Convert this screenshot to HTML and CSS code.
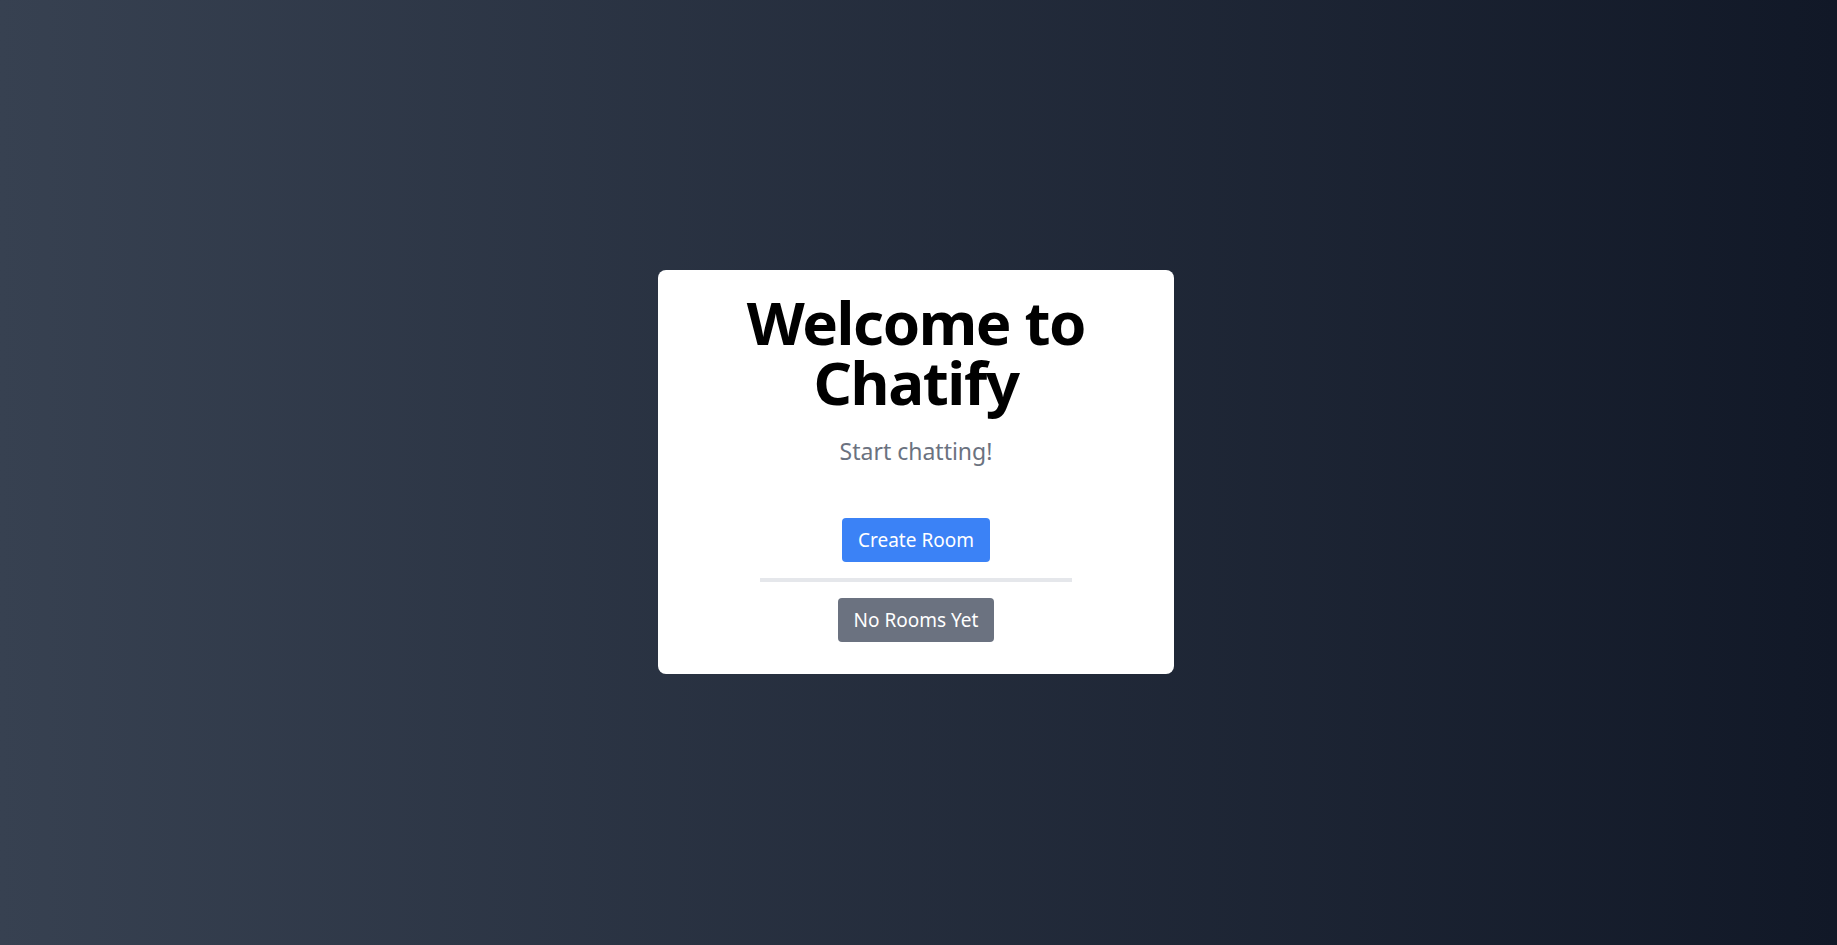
FILE: index.html
```html
<!DOCTYPE html>
<html lang="en">
<head>
<meta charset="utf-8">
<title>Chatify</title>
<link rel="stylesheet" href="styles.css">
</head>
<body>
<main class="page">
  <section class="card">
    <h1 class="title">Welcome to Chatify</h1>
    <p class="subtitle">Start chatting!</p>
    <div class="actions">
      <button class="btn btn-primary">Create Room</button>
      <div class="divider"></div>
      <button class="btn btn-muted">No Rooms Yet</button>
    </div>
  </section>
</main>
</body>
</html>
```
FILE: styles.css
```css
* { box-sizing: border-box; }
html, body { margin: 0; padding: 0; height: 100%; }
body {
  font-family: "Noto Sans", "Open Sans", sans-serif;
  background: linear-gradient(to right, #374151, #111827);
}
.page {
  height: 100%;
  display: flex;
  align-items: center;
  justify-content: center;
  padding: 0 5px 2px 0;
}
.card {
  width: 516px;
  background: #ffffff;
  border-radius: 8px;
  padding: 22px 24px 32px;
  display: flex;
  flex-direction: column;
  align-items: center;
  text-align: center;
}
.title {
  margin: 0 0 23px;
  width: 360px;
  font-size: 60px;
  line-height: 60px;
  font-weight: 700;
  color: #000;
  letter-spacing: -1.4px;
}
.subtitle {
  margin: 0 0 51px;
  font-size: 23px;
  line-height: 32px;
  color: #6b7280;
}
.actions {
  display: flex;
  flex-direction: column;
  align-items: center;
}
.btn {
  font-family: inherit;
  font-size: 19px;
  line-height: 28px;
  padding: 8px 16px;
  border: none;
  border-radius: 4px;
  color: #fff;
}
.btn-primary { background: #3b82f6; }
.btn-muted { background: #6b7280; }
.divider {
  width: 312px;
  height: 4px;
  background: #e5e7eb;
  margin: 16px 0;
}
```
